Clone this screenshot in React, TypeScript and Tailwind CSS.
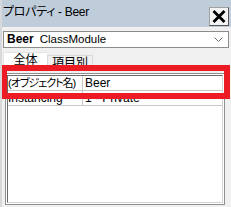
import React from "react";

const font = "font-['Liberation_Sans','Noto_Sans_CJK_JP',sans-serif] [font-feature-settings:'palt']";

const CloseIcon = () => (
  <svg width="14" height="13" viewBox="0 0 14 13">
    <path d="M1.5 1 L12.5 12 M12.5 1 L1.5 12" stroke="#000" strokeWidth="2.8" />
  </svg>
);

const Chevron = () => (
  <svg width="9" height="5" viewBox="0 0 9 5">
    <path d="M0.5 0.5 L4.5 4.5 L8.5 0.5" fill="none" stroke="#6d6d6d" strokeWidth="1" />
  </svg>
);

const rows = [
  { name: "(オブジェクト名)", value: "Beer" },
  { name: "Instancing", value: "1 - Private" },
];

export default function App() {
  return (
    <div className={`relative w-[231px] h-[207px] overflow-hidden bg-[#f0f0f0] border-l-2 border-[#d6d8db] text-black ${font}`}>
      {/* Title bar */}
      <div className="h-[27px] bg-[#bfcddb] flex items-start justify-between">
        <span className="pl-[1px] pt-[4px] text-[12px] leading-[16px] tracking-[-0.3px]">プロパティ - Beer</span>
        <div className="mt-[7px] mr-[2px] w-[20px] h-[19px] bg-[#f4f4f4] border border-[#a0a0a0] border-r-[#555] border-b-[#555] flex items-center justify-center">
          <CloseIcon />
        </div>
      </div>

      {/* Object combo */}
      <div className="mt-[4px] ml-[1px] w-[226px] h-[17px] bg-white border border-[#8c8c8c] flex items-center pl-[3px] pr-[5px]">
        <span className="text-[12px] font-bold leading-[15px]">Beer</span>
        <span className="ml-[6px] text-[11.5px] leading-[15px]">ClassModule</span>
        <span className="ml-auto flex items-center">
          <Chevron />
        </span>
      </div>

      {/* Tabs */}
      <div className="mt-[4px] h-[14px] flex items-end pl-[1px]">
        <div className="w-[44px] h-[14px] bg-white border-l border-t border-[#e3e3e3] flex justify-center pt-[1px] text-[12px] leading-[13px]">
          全体
        </div>
        <div className="w-[46px] h-[11px] border-l border-t border-r border-[#d9d9d9] flex justify-center pt-[1px] text-[12px] leading-[13px]">
          項目別
        </div>
      </div>

      {/* Property grid */}
      <div className="mt-[7px] ml-[3px] w-[220px] h-[132px] border border-[#8f8f8f] bg-white p-[1px]">
        <div className="h-full border border-[#6b6b6b] border-r-[#d4d4d4] border-b-[#d4d4d4] bg-white">
          {rows.map((r) => (
            <div key={r.name} className="h-[15px] flex border-b border-[#c8c8c8] leading-[14px]">
              <div className="w-[75px] shrink-0 border-r border-[#c8c8c8] whitespace-nowrap overflow-hidden text-[11px] tracking-[-1px]">
                {r.name === "Instancing" ? <span className="text-[12px] tracking-normal">{r.name}</span> : r.name}
              </div>
              <div className="pl-[2px] whitespace-nowrap text-[12px]">{r.value}</div>
            </div>
          ))}
        </div>
      </div>

      {/* Highlight frame */}
      <div className="absolute left-[-1px] top-[65px] w-[229px] h-[34px] border-[6px] border-[#ed1c24]" />
    </div>
  );
}
